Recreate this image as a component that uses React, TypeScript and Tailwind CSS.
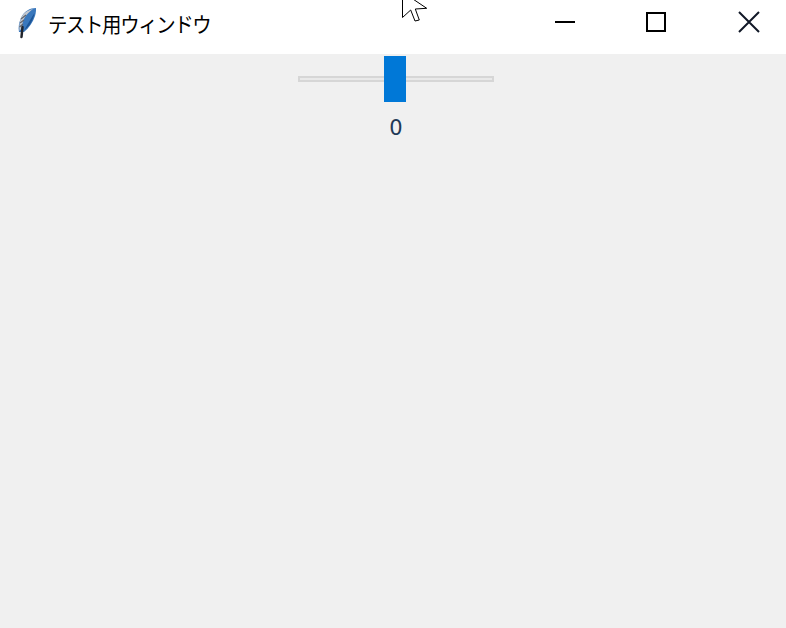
import { useState } from 'react';

function FeatherIcon() {
  return (
    <svg width="22" height="32" viewBox="0 0 22 32" className="shrink-0 mt-[2px]">
      <path d="M20 1 C14 1 8 4 5 11 C3 16 2 20 3 25 L8 25 C13 21 17 15 19 9 C20 6 20 3 20 1 Z" fill="#3a78bd" />
      <path d="M17 2 C12 3 7 6 5 11 C3.500 15 3 20 3.500 24 L6 21 C6 17 7 13 9 10 C11 7 14 4 17 2 Z" fill="#c4c8cf" />
      <path d="M18.500 6 C16 10 12 16 8.500 23 C13 20 17 14 18.500 6 Z" fill="#1d5596" />
      <path d="M10 8 L5 12 M8 13 L4 16 M7 17 L3.500 20" stroke="#60646c" strokeWidth="1.200" />
      <path d="M6.500 20 L5.500 30" stroke="#20242c" strokeWidth="2.500" strokeLinecap="round" />
    </svg>
  );
}

function Cursor() {
  return (
    <svg width="30" height="24" viewBox="0 0 30 24" className="absolute left-[400px] top-0 pointer-events-none">
      <path
        d="M2.500 -8 L2.500 17.500 L10.700 10 L15 21 L19.300 20 L15.300 9 L26.700 8.300 Z"
        fill="#ffffff"
        stroke="#000000"
        strokeWidth="1"
        strokeLinejoin="round"
      />
    </svg>
  );
}

export default function App() {
  const [value] = useState(0);

  return (
    <div
      className="relative w-[786px] h-[628px] overflow-hidden flex flex-col bg-[#f0f0f0]"
      style={{ fontFamily: '"Noto Sans CJK JP", "Liberation Sans", sans-serif' }}
    >
      <header className="h-[54px] shrink-0 bg-white flex items-center pb-[10px]">
        <div className="w-[48px] pl-[16px] flex items-center">
          <FeatherIcon />
        </div>
        <h1 className="mt-[2px] text-[21px] tracking-[-1.5px] scale-x-[0.925] origin-left font-normal text-black leading-none">
          テスト用ウィンドウ
        </h1>
        <div className="ml-auto flex items-center">
          <button className="w-[90px] h-[44px] flex items-center justify-center">
            <span className="block w-[20px] h-[2px] bg-black" />
          </button>
          <button className="w-[92px] h-[44px] mr-[10px] flex items-center justify-center">
            <span className="block w-[20px] h-[20px] border-2 border-black" />
          </button>
          <button className="w-[74px] h-[44px] flex items-center justify-center">
            <svg width="22" height="22" viewBox="0 0 22 22">
              <path d="M1 1 L21 21 M21 1 L1 21" stroke="#111827" strokeWidth="2" />
            </svg>
          </button>
        </div>
      </header>

      <main className="flex flex-col items-center pl-[6px]">
        <div className="relative w-[196px] h-[46px] mt-[2px] flex items-center">
          <div className="w-full h-[6px] border-2 border-[#d6d6d6] bg-[#e9e9e9]" />
          <div className="absolute left-[86px] top-0 w-[22px] h-[46px] bg-[#0078d7]" />
        </div>
        <div
          className="mt-[14px] text-[21px] leading-[24px] text-[#1f3a56]"
          style={{ fontFamily: '"DejaVu Sans", "Liberation Sans", sans-serif' }}
        >
          {value}
        </div>
      </main>

      <Cursor />
    </div>
  );
}
